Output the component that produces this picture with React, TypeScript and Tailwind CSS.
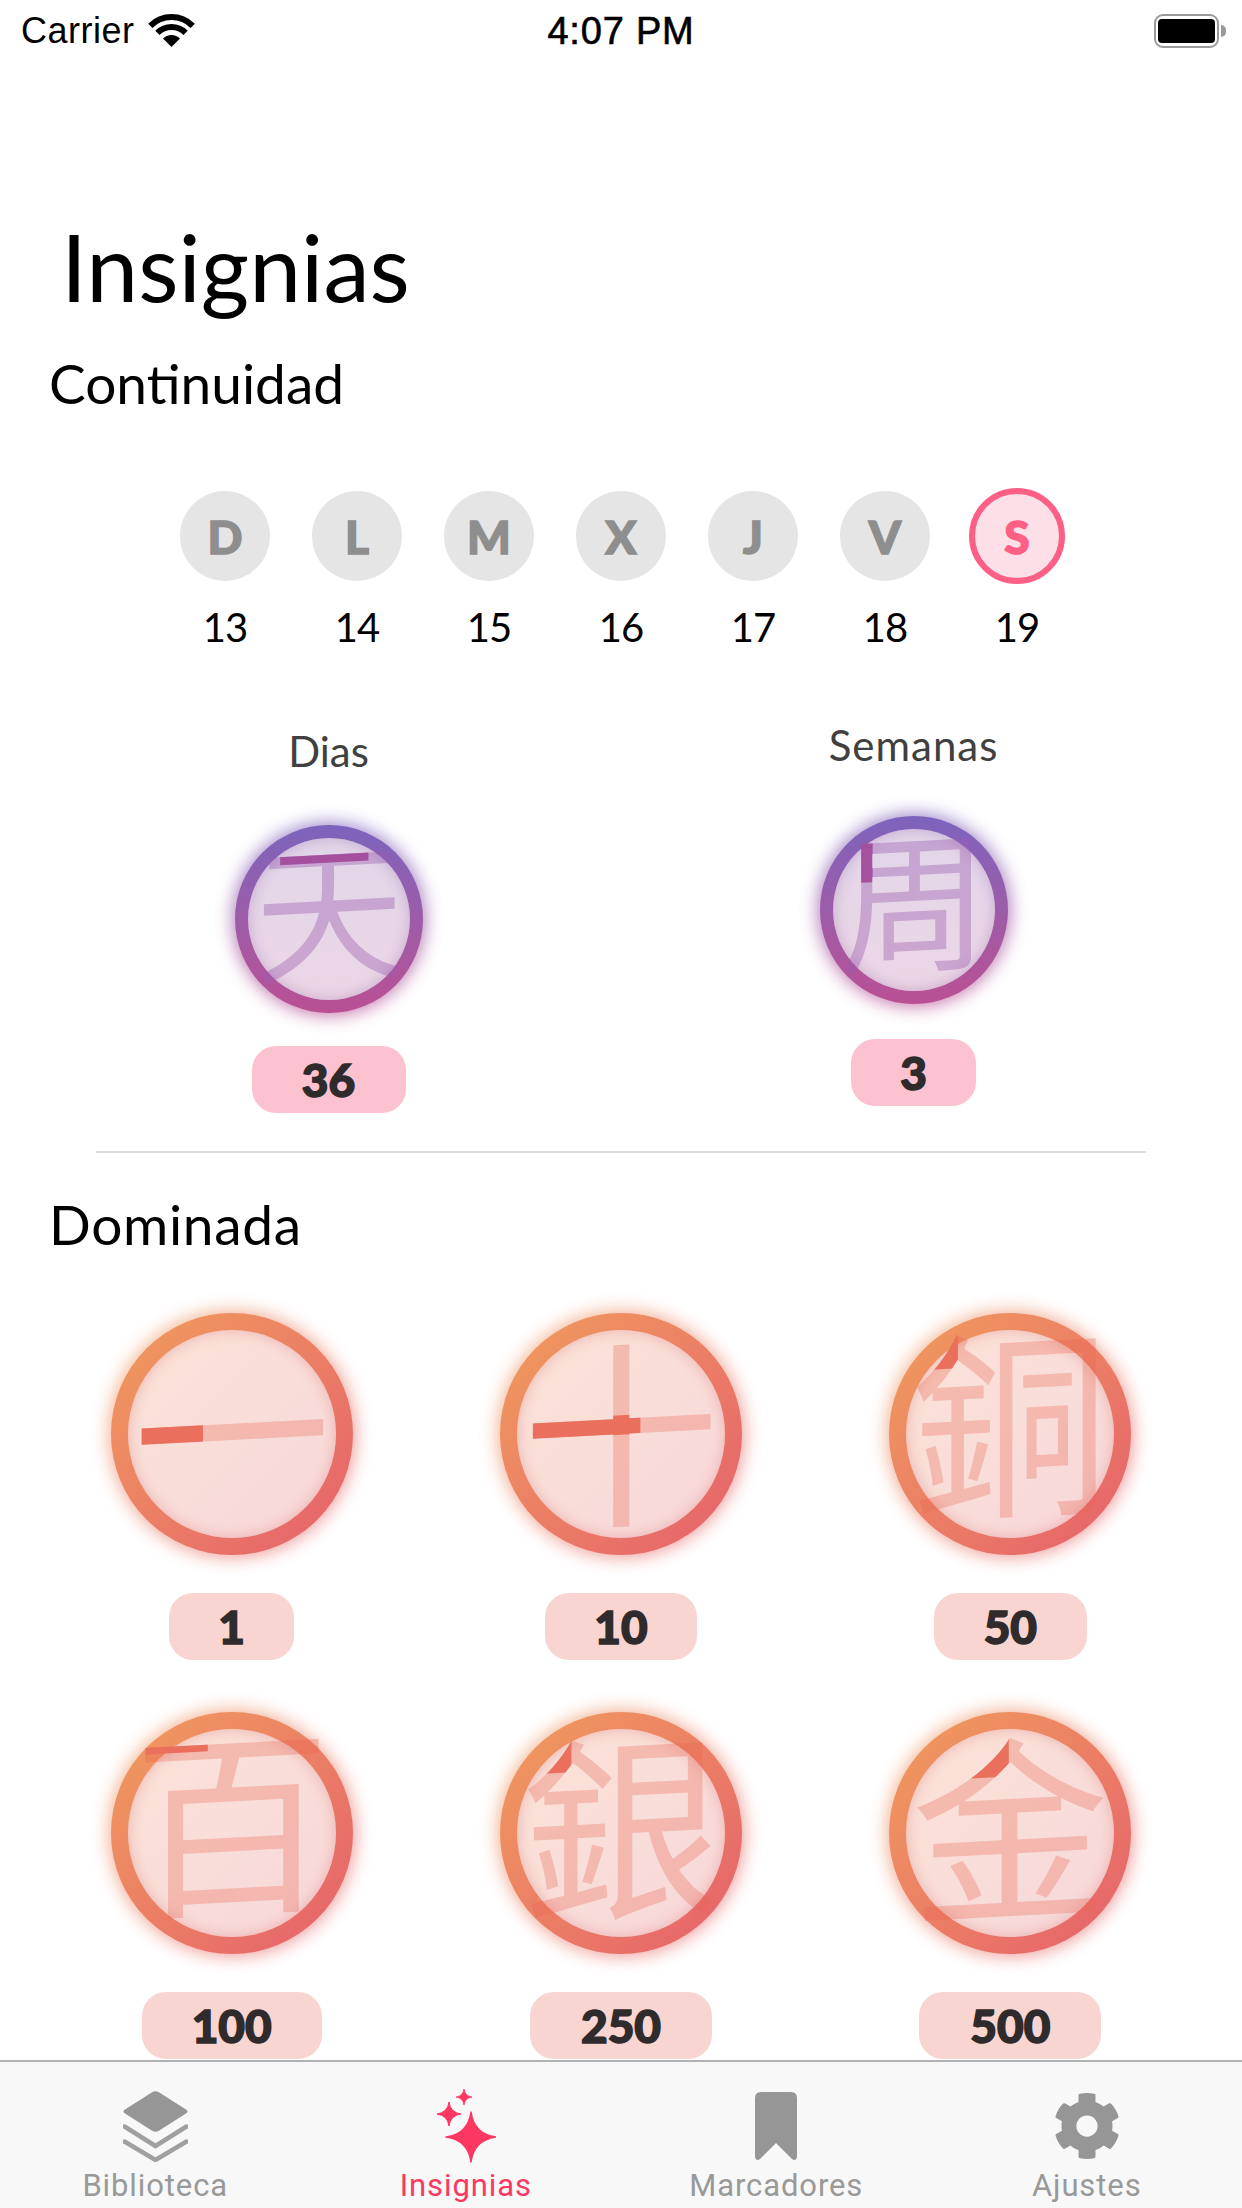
// Insignias screen - streak and mastery badges

import { FaCog } from 'react-icons/fa'

const days = [
  { letter: 'D', date: 13 },
  { letter: 'L', date: 14 },
  { letter: 'M', date: 15 },
  { letter: 'X', date: 16 },
  { letter: 'J', date: 17 },
  { letter: 'V', date: 18 },
  { letter: 'S', date: 19, active: true },
]

const mastery = [
  { char: '一', count: '1', pill: 'w-[125px]', lift: '-translate-y-[11px]', clip: '[clip-path:inset(0_62%_0_0)]' },
  { char: '十', count: '10', pill: 'w-[152px]', lift: '-translate-y-[9px]', clip: '[clip-path:inset(46%_42%_46%_0)]' },
  { char: '銅', count: '50', pill: 'w-[153px]', lift: '-translate-y-[20px]', clip: '[clip-path:inset(10%_71.5%_70%_14%)]' },
  { char: '百', count: '100', pill: 'w-[180px]', lift: '-translate-y-[20px]', clip: '[clip-path:inset(0_60%_76%_0)]' },
  { char: '銀', count: '250', pill: 'w-[182px]', lift: '-translate-y-[15px]', clip: '[clip-path:inset(10%_70.5%_70%_14%)]' },
  { char: '金', count: '500', pill: 'w-[182px]', lift: '-translate-y-[13px]', clip: '[clip-path:inset(8%_50.5%_68%_30%)]' },
]

function Wifi() {
  return (
    <svg width="47" height="33" viewBox="0 0 47 33" fill="none" className="ml-[13px] -mt-[2px]">
      <path d="M2.3 11.8A30 30 0 0 1 44.7 11.8" stroke="#000" strokeWidth="6" />
      <path d="M9.4 18.9A20 20 0 0 1 37.6 18.9" stroke="#000" strokeWidth="6" />
      <path d="M23.5 33L15 24.5A12 12 0 0 1 32 24.5Z" fill="#000" />
    </svg>
  )
}

function StatusBar() {
  return (
    <div className="relative flex h-[60px] shrink-0 items-center pl-[21px] pr-4 pt-[2px] font-['Liberation_Sans',sans-serif] text-[36px] tracking-[0.5px] text-black">
      <span>Carrier</span>
      <Wifi />
      <span className="absolute left-1/2 -translate-x-1/2 text-[38px] tracking-[0.8px] [-webkit-text-stroke:0.6px_currentColor]">4:07 PM</span>
      <div className="ml-auto flex items-center gap-[2px]">
        <div className="flex h-[34px] w-[65px] items-center justify-center rounded-[9px] border-2 border-[#9a9a9a]">
          <div className="h-[24px] w-[57px] rounded-[4px] bg-black" />
        </div>
        <div className="h-[12px] w-[5px] rounded-r-full bg-[#9a9a9a]" />
      </div>
    </div>
  )
}

function DayItem({ letter, date, active }: { letter: string; date: number; active?: boolean }) {
  return (
    <div className="flex w-[132px] flex-col items-center">
      <div className="flex h-[96px] items-center justify-center">
        {active ? (
          <div className="flex h-[96px] w-[96px] items-center justify-center rounded-full border-[6px] border-[#fd5f85] bg-[#fde0e7] text-[46px] font-black text-[#fd5f85] [-webkit-text-stroke:1.5px_currentColor]">
            {letter}
          </div>
        ) : (
          <div className="flex h-[90px] w-[90px] items-center justify-center rounded-full bg-[#e5e5e5] text-[46px] font-black text-[#8e8e8e] [-webkit-text-stroke:1.5px_currentColor]">
            {letter}
          </div>
        )}
      </div>
      <span className="mt-[19px] text-[40px] leading-[48px] tracking-[-1px] text-black">{date}</span>
    </div>
  )
}

function Glyph({ char, size, tint, accent, clip, lift }: { char: string; size: string; tint: string; accent: string; clip: string; lift: string }) {
  const base = "absolute inset-0 flex items-center justify-center font-['Noto_Sans_CJK_TC',sans-serif] leading-none -skew-y-3"
  return (
    <>
      <span className={`${base} ${lift} ${size} ${tint}`}>{char}</span>
      <span aria-hidden className={`${base} ${lift} ${size} ${accent} ${clip}`}>{char}</span>
    </>
  )
}

function StreakBadge({ char, clip }: { char: string; clip: string }) {
  return (
    <div className="relative h-[188px] w-[188px]">
      <div className="absolute -inset-[2px] rounded-full bg-linear-to-b from-[#7c63bd] to-[#ba4f93] opacity-80 blur-[9px]" />
      <div className="relative h-full w-full rounded-full bg-linear-to-b from-[#7c63bd] to-[#ba4f93] p-[13px]">
        <div className="h-full w-full rounded-full bg-linear-to-b from-[#e2d6ea] to-[#ecd6e5] shadow-[inset_0_0_14px_rgba(150,100,170,0.4)]" />
      </div>
      <Glyph char={char} size="text-[150px]" tint="text-[#9c5cb0]/40" accent="text-[#a4509f]" clip={clip} lift="-translate-y-[15px]" />
    </div>
  )
}

function MasteryBadge({ char, clip, lift }: { char: string; clip: string; lift: string }) {
  return (
    <div className="relative h-[242px] w-[242px]">
      <div className="absolute -inset-[2px] rounded-full bg-linear-to-br from-[#f09c5c] to-[#e55f6b] opacity-70 blur-[9px]" />
      <div className="relative h-full w-full rounded-full bg-linear-to-br from-[#f09c5c] to-[#e55f6b] p-[17px]">
        <div className="h-full w-full rounded-full bg-linear-to-br from-[#fbe3d8] to-[#f7d8d9] shadow-[inset_0_0_14px_rgba(220,110,110,0.4)]" />
      </div>
      <Glyph char={char} size="text-[198px]" tint="text-[#e8654f]/30" accent="text-[#ea6f5d]" clip={clip} lift={lift} />
    </div>
  )
}

function CountPill({ value, className }: { value: string; className: string }) {
  return (
    <div className={`flex h-[67px] items-center justify-center rounded-[24px] text-[46px] font-black text-[#2f2a2c] [-webkit-text-stroke:1.5px_currentColor] ${className}`}>
      {value}
    </div>
  )
}

function LayersIcon() {
  return (
    <svg width="65" height="71" viewBox="0 0 65 71">
      <path d="M29.5 1L2 18.5Q-1 20.5 2 22.5L29.5 40Q32.5 41.5 35.5 40L63 22.5Q66 20.5 63 18.5L35.5 1Q32.5 -0.5 29.5 1Z" fill="#969696" />
      <path d="M1.5 35.5L32.5 55L63.5 35.5" fill="none" stroke="#a0a0a0" strokeWidth="4.5" strokeLinecap="round" />
      <path d="M1.5 50.5L32.5 69L63.5 50.5" fill="none" stroke="#a0a0a0" strokeWidth="4.5" strokeLinecap="round" />
    </svg>
  )
}

function SparklesIcon() {
  const star = (cx: number, cy: number, r: number) => {
    const k = r * 0.12
    return `M${cx} ${cy - r}Q${cx + k} ${cy - k} ${cx + r} ${cy}Q${cx + k} ${cy + k} ${cx} ${cy + r}Q${cx - k} ${cy + k} ${cx - r} ${cy}Q${cx - k} ${cy - k} ${cx} ${cy - r}Z`
  }
  return (
    <svg width="60" height="74" viewBox="0 0 60 74" fill="#fb3762">
      <path d={star(35, 48, 25)} stroke="#fb3762" strokeWidth="1.5" strokeLinejoin="round" />
      <path d={star(13, 25, 12)} stroke="#fb3762" strokeWidth="1" strokeLinejoin="round" />
      <path d={star(28, 8, 8)} stroke="#fb3762" strokeWidth="0.8" strokeLinejoin="round" />
    </svg>
  )
}

function BookmarkIcon() {
  return (
    <svg width="42" height="68" viewBox="0 0 42 68">
      <path d="M6 0H36Q42 0 42 6V64Q42 68 39 68Q38 68 36 66L21 51L6 66Q4 68 3 68Q0 68 0 64V6Q0 0 6 0Z" fill="#969696" />
    </svg>
  )
}

function TabItem({ label, active, children }: { label: string; active?: boolean; children: React.ReactNode }) {
  return (
    <div className="flex flex-col items-center">
      <div className="flex h-[74px] items-center justify-center">{children}</div>
      <span className={`mt-[6px] font-['Roboto',sans-serif] text-[31px] leading-[34px] tracking-[0.9px] ${active ? 'text-[#fb3762]' : 'text-[#999999]'}`}>
        {label}
      </span>
    </div>
  )
}

function TabBar() {
  return (
    <div className="z-10 grid h-[148px] shrink-0 grid-cols-4 overflow-hidden border-t-2 border-[#b2b2b2] bg-[#f8f8f8] pt-[27px]">
      <TabItem label="Biblioteca"><LayersIcon /></TabItem>
      <TabItem label="Insignias" active><SparklesIcon /></TabItem>
      <TabItem label="Marcadores"><BookmarkIcon /></TabItem>
      <TabItem label="Ajustes"><FaCog className="h-[68px] w-[68px] text-[#969696]" /></TabItem>
    </div>
  )
}

export default function App() {
  return (
    <div className="flex h-[2208px] w-[1242px] flex-col overflow-hidden bg-white font-['Lato',sans-serif]">
      <StatusBar />
      <main className="min-h-0 flex-1">
        <h1 className="ml-[61px] mt-[156px] text-[93px] font-normal leading-[100px] text-black">Insignias</h1>
        <h2 className="ml-[49px] mt-[34px] text-[55px] font-normal leading-[66px] text-black">Continuidad</h2>

        <div className="mt-[72px] flex justify-center">
          {days.map((day) => (
            <DayItem key={day.letter} {...day} />
          ))}
        </div>

        <div className="mt-[67px] grid grid-cols-2 px-9">
          <div className="mt-[8px] flex flex-col items-center">
            <span className="text-[42px] leading-[50px] text-[#404040]">Dias</span>
            <div className="mt-[49px]">
              <StreakBadge char="天" clip="[clip-path:inset(10%_29%_72%_24%)]" />
            </div>
            <CountPill value="36" className="mt-[33px] w-[154px] bg-[#fcc2d0]" />
          </div>
          <div className="mt-[2px] flex flex-col items-center">
            <span className="text-[42px] leading-[50px] tracking-[1px] text-[#404040]">Semanas</span>
            <div className="mt-[46px]">
              <StreakBadge char="周" clip="[clip-path:inset(14%_72%_58%_18%)]" />
            </div>
            <CountPill value="3" className="mt-[35px] w-[125px] bg-[#fcc2d0]" />
          </div>
        </div>

        <div className="mx-[96px] mt-[38px] h-[2px] bg-[#dcdcdc]" />

        <h2 className="ml-[49px] mt-[38px] text-[55px] font-normal leading-[66px] tracking-[0.7px] text-black">Dominada</h2>

        <div className="mt-[56px] grid grid-cols-3 gap-y-[52px] px-[37px]">
          {mastery.map((item) => (
            <div key={item.count} className="flex flex-col items-center">
              <MasteryBadge char={item.char} clip={item.clip} lift={item.lift} />
              <CountPill value={item.count} className={`mt-[38px] bg-[#f8d5d0] ${item.pill}`} />
            </div>
          ))}
        </div>
      </main>
      <TabBar />
    </div>
  )
}
